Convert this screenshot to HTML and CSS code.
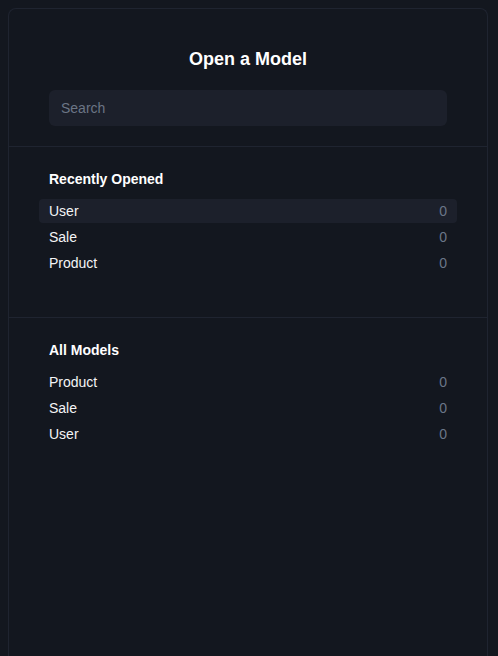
FILE: index.html
```html
<!DOCTYPE html>
<html lang="en">
<head>
<meta charset="utf-8">
<title>Open a Model</title>
<link rel="stylesheet" href="styles.css">
</head>
<body>
<div class="card">
  <div class="header">
    <h1 class="title">Open a Model</h1>
    <input class="search" type="text" placeholder="Search">
  </div>
  <div class="section">
    <h2 class="section-title">Recently Opened</h2>
    <ul class="list">
      <li class="row active"><span class="name">User</span><span class="count">0</span></li>
      <li class="row"><span class="name">Sale</span><span class="count">0</span></li>
      <li class="row"><span class="name">Product</span><span class="count">0</span></li>
    </ul>
  </div>
  <div class="section last">
    <h2 class="section-title">All Models</h2>
    <ul class="list">
      <li class="row"><span class="name">Product</span><span class="count">0</span></li>
      <li class="row"><span class="name">Sale</span><span class="count">0</span></li>
      <li class="row"><span class="name">User</span><span class="count">0</span></li>
    </ul>
  </div>
</div>
</body>
</html>
```
FILE: styles.css
```css
html, body {
  background: #13171f;
}
body {
  margin: 8px 8px 0;
  font-family: "Liberation Sans", Arial, sans-serif;
  color: #f3f4f6;
  overflow: hidden;
}
.card {
  box-sizing: border-box;
  width: 480px;
  min-height: calc(100vh - 8px);
  border: 1px solid #1f2430;
  border-bottom: none;
  border-radius: 8px 8px 0 0;
  background: #13171f;
}
.header {
  padding: 36px 40px 20px;
  border-bottom: 1px solid #1f2430;
  display: flex;
  flex-direction: column;
}
.title {
  margin: 0 0 17px;
  font-size: 18px;
  line-height: 28px;
  font-weight: 700;
  text-align: center;
  color: #ffffff;
}
.search {
  box-sizing: border-box;
  height: 36px;
  width: 100%;
  padding: 0 12px;
  border: none;
  border-radius: 6px;
  background: #1c202b;
  color: #f3f4f6;
  font-family: inherit;
  font-size: 14px;
  outline: none;
}
.search::placeholder {
  color: #6b7585;
}
.section {
  padding: 22px 40px 42px;
  border-bottom: 1px solid #1f2430;
}
.section.last {
  border-bottom: none;
}
.section-title {
  margin: 0 0 10px;
  font-size: 14px;
  line-height: 20px;
  font-weight: 700;
  color: #ffffff;
}
.list {
  list-style: none;
  margin: 0 -10px;
  padding: 0;
  display: flex;
  flex-direction: column;
  gap: 2px;
}
.row {
  display: flex;
  justify-content: space-between;
  align-items: center;
  height: 24px;
  padding: 0 10px;
  border-radius: 4px;
  font-size: 14px;
  line-height: 24px;
}
.row.active {
  background: #1c202b;
}
.count {
  color: #6b7688;
}
```
